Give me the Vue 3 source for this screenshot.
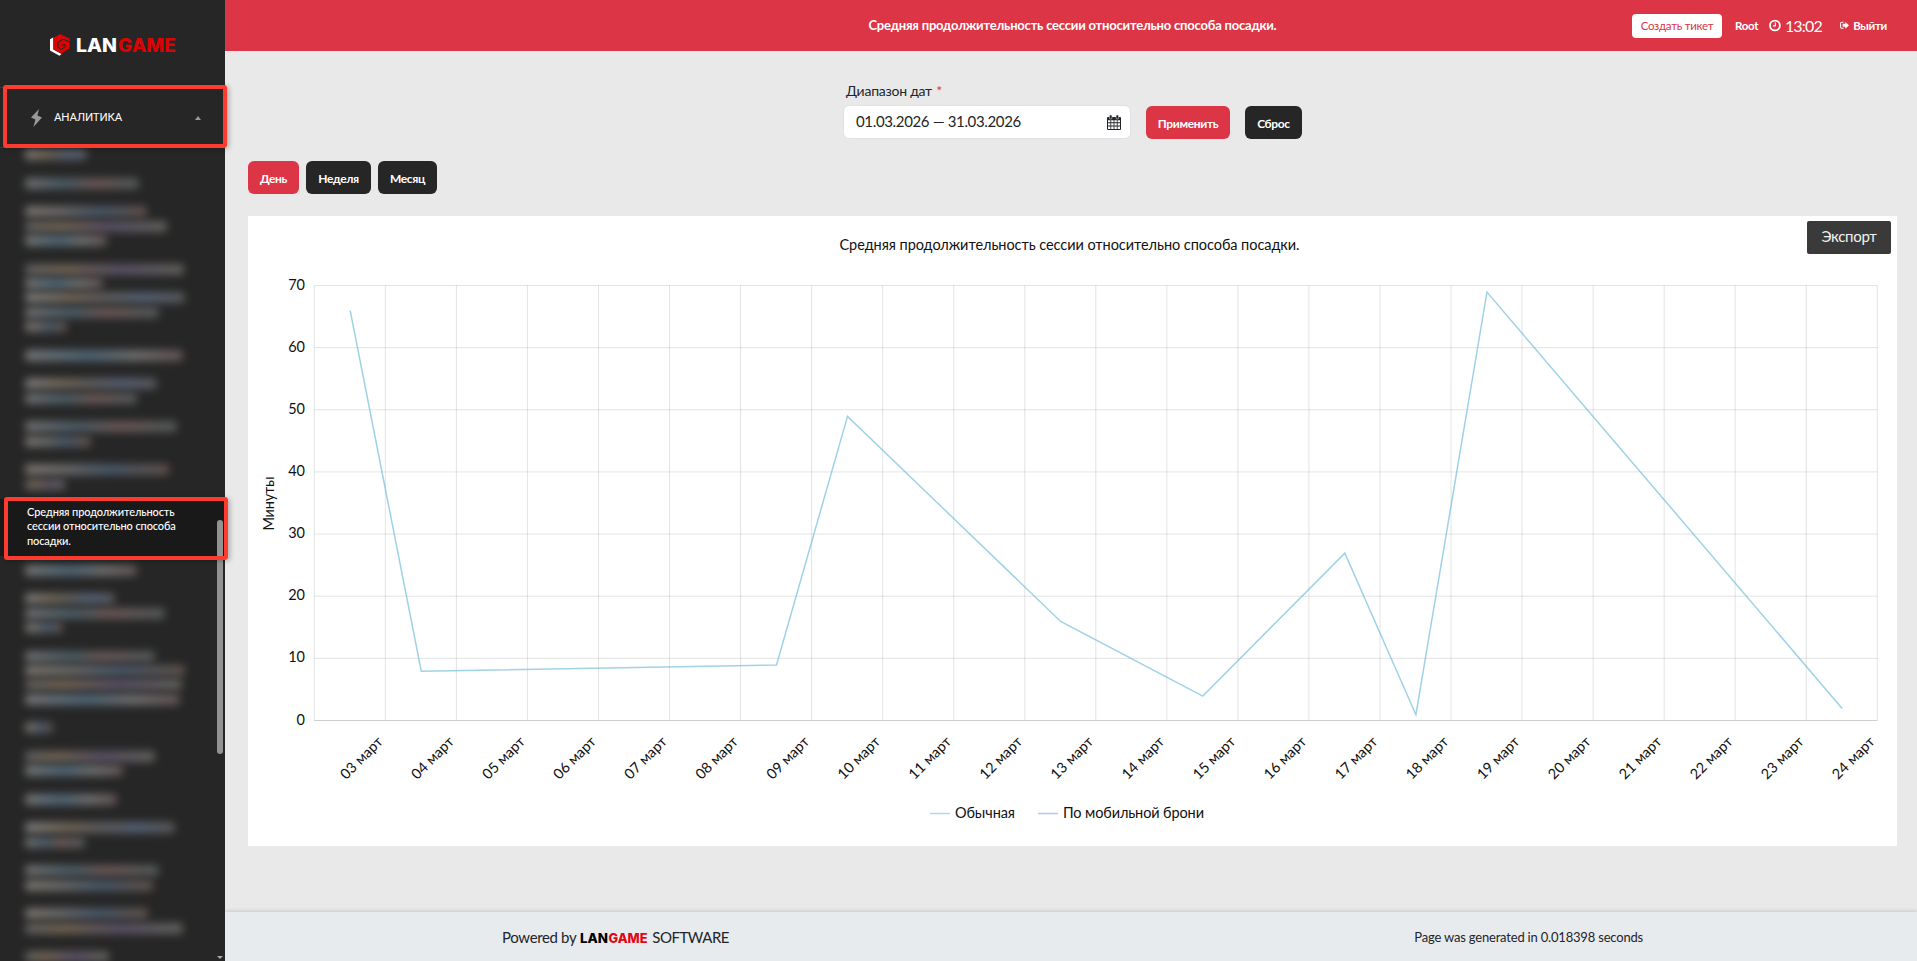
<template>
  <div class="page">
    <aside class="sidebar">
      <div class="logo">
        <svg width="106" height="24" viewBox="0 0 106 24">
          <path d="M1 6.2 4.2 4.4V16.6L12.6 20.9 10.4 22.8 1 17.6z" fill="#fff" />
          <path d="M11 1 20.6 5.6V15.6L12.4 20.4 5 16.6V4.4z" fill="#d90404" />
          <path d="M21 9.2 16.8 7.2 14 6.4 9 9.2V14.4L12 16.4 16.2 14V11.6L12.2 12.4" fill="none" stroke="#262626" stroke-width="1" />
          <text x="27" y="18.5" class="brand" fill="#fff" textLength="41" lengthAdjust="spacingAndGlyphs">LAN</text>
          <text x="69" y="18.5" class="brand" fill="#d90404" textLength="58" lengthAdjust="spacingAndGlyphs">GAME</text>
        </svg>
      </div>

      <div class="menu-head">
        <svg class="bolt" width="11" height="18" viewBox="0 0 11 18">
          <path d="M8 0 0 8.4 4.4 10.6 2.4 18 11 8.6 6.4 6.6z" fill="#999" />
        </svg>
        <span class="menu-title">АНАЛИТИКА</span>
        <span class="caret"></span>
      </div>

      <ul class="menu">
        <li
          v-for="(item, i) in menu"
          :key="i"
          :class="{ active: item.title, hidden: !item.title }"
        >
          <template v-if="item.title">{{ item.title }}</template>
          <template v-else>
            <div v-for="(width, n) in item.lines" :key="n" class="line">
              <i :class="'tone' + ((i + n) % 5)" :style="{ width: width + 'px' }"></i>
            </div>
          </template>
        </li>
      </ul>

      <div class="scroll-thumb"></div>
      <div class="scroll-down"></div>
      <div class="mark mark-head"></div>
      <div class="mark mark-item"></div>
    </aside>

    <div class="main">
      <header class="topbar">
        <div class="topbar-title">{{ title }}</div>
        <div class="topbar-tools">
          <button class="ticket">Создать тикет</button>
          <span class="user">Root</span>
          <span class="clock">
            <svg width="13" height="13" viewBox="0 0 13 13" fill="none" stroke="#fff">
              <circle cx="6.5" cy="6.5" r="5.4" stroke-width="2" />
              <path d="M7 3.2V7H4.2" stroke-width="1.3" />
            </svg>
            <span>{{ time }}</span>
          </span>
          <a class="logout">
            <svg width="11" height="9" viewBox="0 0 11 9">
              <path d="M4.2.7H2.1Q.7.7.7 2.1V6.4Q.7 7.8 2.1 7.8H4.2" fill="none" stroke="#fff" stroke-width="1.2" />
              <path d="M6.4.3 10.8 4.3 6.4 8.3V6.1H3.2V2.5H6.4z" fill="#fff" />
            </svg>
            <span>Выйти</span>
          </a>
        </div>
      </header>

      <section class="content">
        <form class="filter" @submit.prevent>
          <div class="field">
            <label>Диапазон дат <b>*</b></label>
            <div class="date">
              <span>{{ range }}</span>
              <svg width="14" height="15" viewBox="0 0 14 15">
                <path d="M0 3Q0 2 1 2H13Q14 2 14 3V14Q14 15 13 15H1Q0 15 0 14z" fill="#212529" />
                <path
                  d="M1 5.2h2.4v2H1zM4.2 5.2h2.4v2H4.2zM7.4 5.2h2.4v2H7.4zM10.6 5.2H13v2h-2.4zM1 8.2h2.4v2.3H1zM4.2 8.2h2.4v2.3H4.2zM7.4 8.2h2.4v2.3H7.4zM10.6 8.2H13v2.3h-2.4zM1 11.5h2.4V14H1zM4.2 11.5h2.4V14H4.2zM7.4 11.5h2.4V14H7.4zM10.6 11.5H13V14h-2.4z"
                  fill="#fff"
                />
                <rect x="2.4" y="0" width="2.6" height="4" rx="1" fill="#212529" stroke="#fff" stroke-width=".5" />
                <rect x="9" y="0" width="2.6" height="4" rx="1" fill="#212529" stroke="#fff" stroke-width=".5" />
              </svg>
            </div>
          </div>
          <button class="btn btn-red apply">Применить</button>
          <button class="btn reset">Сброс</button>
        </form>

        <div class="periods">
          <button
            v-for="p in periods"
            :key="p.id"
            class="btn"
            :class="[p.id, { 'btn-red': p.id == period }]"
            @click="period = p.id"
          >
            {{ p.name }}
          </button>
        </div>

        <div class="card">
          <button class="export">Экспорт</button>
          <svg class="chart" width="1649" height="630" viewBox="0 0 1649 630">
            <text x="591.5" y="33.5" textLength="460">{{ title }}</text>

            <g class="grid">
              <path v-for="t in ticks" :key="'h' + t" :d="`M${left} ${yPos(t)}H${right}`" />
              <path v-for="n in days.length + 1" :key="'v' + n" :d="`M${left + (n - 1) * step} ${top}V${bottom}`" />
            </g>
            <path class="axis" :d="`M${left} ${bottom}H${right}`" />

            <text v-for="t in ticks" :key="'t' + t" x="57" :y="yPos(t) + 4" text-anchor="end">{{ t }}</text>
            <text
              v-for="(day, i) in days"
              :key="day"
              text-anchor="end"
              :transform="`translate(${left + i * step + 69.5} ${bottom + 22}) rotate(-45)`"
            >
              {{ day }}
            </text>
            <text transform="translate(26 314.5) rotate(-90)" textLength="54">Минуты</text>

            <polyline class="series" :points="points" />

            <path d="M682 597.5H702" stroke="#afd9eb" stroke-width="1.5" />
            <text x="707" y="602" textLength="60">Обычная</text>
            <path d="M790 597.5H810" stroke="#b0caee" stroke-width="1.5" />
            <text x="815" y="602" textLength="141">По мобильной брони</text>
          </svg>
        </div>
      </section>

      <footer class="footer">
        <div class="powered">
          <span>Powered by</span>
          <svg width="68" height="12" viewBox="0 0 68 12">
            <text x="0" y="12" class="brand small" fill="#000" textLength="28" lengthAdjust="spacingAndGlyphs">LAN</text>
            <text x="28.5" y="12" class="brand small" fill="#e30613" textLength="39" lengthAdjust="spacingAndGlyphs">GAME</text>
          </svg>
          <span class="software">SOFTWARE</span>
        </div>
        <div class="generated">Page was generated in 0.018398 seconds</div>
      </footer>
    </div>
  </div>
</template>

<script setup>
import { ref, computed } from "vue";

const title = "Средняя продолжительность сессии относительно способа посадки.";
const time = ref("13:02");
const range = ref("01.03.2026 — 31.03.2026");
const period = ref("day");

const periods = [
  { id: "day", name: "День" },
  { id: "week", name: "Неделя" },
  { id: "month", name: "Месяц" },
];

// blurred items keep only the widths of their lines
const menu = [
  { lines: [62] },
  { lines: [114] },
  { lines: [122, 142, 82] },
  { lines: [159, 78, 161, 134, 42] },
  { lines: [158] },
  { lines: [132, 112] },
  { lines: [152, 66] },
  { lines: [144, 40] },
  { title },
  { lines: [112] },
  { lines: [90, 140, 38] },
  { lines: [130, 160, 157, 155] },
  { lines: [28] },
  { lines: [130, 98] },
  { lines: [92] },
  { lines: [150, 60] },
  { lines: [134, 128] },
  { lines: [123, 158] },
  { lines: [84] },
];

const left = 66.3;
const right = 1629.3;
const top = 69.5;
const bottom = 504.5;
const ticks = [0, 10, 20, 30, 40, 50, 60, 70];

const days = [];
for (let d = 3; d <= 24; d++) {
  days.push(String(d).padStart(2, "0") + " март");
}
const step = (right - left) / days.length;

const values = [
  [3, 66],
  [4, 8],
  [9, 9],
  [10, 49],
  [13, 16],
  [15, 4],
  [17, 27],
  [18, 1],
  [19, 69],
  [24, 2],
];

function yPos(value) {
  return bottom - (value / 70) * (bottom - top);
}

const points = computed(function () {
  return values
    .map(([day, value]) => `${left + 0.4 + (day - 2.5) * step},${yPos(value) + 0.4}`)
    .join(" ");
});
</script>

<style>
body {
  margin: 0;
  overflow: hidden;
}
</style>

<style scoped>
.page {
  display: flex;
  height: 961px;
  background: #e9e9e9;
  color: #212529;
  font-family: Lato, "Liberation Sans", sans-serif;
}

button {
  border: none;
  padding: 0;
  font-family: inherit;
}

.sidebar {
  position: relative;
  z-index: 2;
  flex: none;
  width: 225px;
  height: 961px;
  background: #262626;
}

.logo {
  height: 54px;
  padding: 33px 0 0 49px;
}

.logo svg,
.powered svg {
  display: block;
  overflow: visible;
}

.brand {
  font-family: Inter, sans-serif;
  font-weight: 800;
  font-size: 18.5px;
  letter-spacing: 0;
}

.brand.small {
  font-size: 13px;
}

.menu-head {
  display: flex;
  align-items: center;
  box-sizing: border-box;
  height: 61px;
  padding: 0 24px 0 31px;
  border-top: 1px solid #3a3a3a;
  border-bottom: 1px solid #3a3a3a;
}

.menu-title {
  flex: 1;
  margin-left: 12px;
  padding-bottom: 2px;
  color: #fff;
  font-family: Roboto, sans-serif;
  font-size: 11.5px;
  letter-spacing: -0.15px;
}

.caret {
  border: 3.5px solid transparent;
  border-top: none;
  border-bottom: 4px solid #999;
}

.menu {
  height: 813px;
  margin: 0;
  padding: 0;
  overflow: hidden;
  list-style: none;
  font-size: 11px;
  line-height: 14.34px;
}

.menu li {
  padding: 7.17px 40px 7.17px 27px;
}

.menu li:first-child {
  padding-top: 0;
}

.menu li.active {
  padding-top: 6.17px;
  padding-bottom: 8.17px;
  background: #191919;
  color: #fff;
  font-weight: 500;
  letter-spacing: -0.12px;
}

.hidden .line {
  display: flex;
  align-items: center;
  height: 14.34px;
  margin-left: -2px;
}

.hidden i {
  height: 11px;
  margin-bottom: 1px;
  border-radius: 4px;
  filter: blur(4.5px);
  opacity: 0.85;
}

.tone0 {
  background: linear-gradient(90deg, #888, #7a6d5c 30%, #666 50%, #5c6a80 75%, #606060);
}

.tone1 {
  background: linear-gradient(90deg, #7d7d7d, #50646f 35%, #75605c 60%, #5a6264);
}

.tone2 {
  background: linear-gradient(90deg, #88837a, #727272 30%, #4e6074 60%, #6c5a50);
}

.tone3 {
  background: linear-gradient(90deg, #686868, #7c6c58 25%, #605870 60%, #6c6c62);
}

.tone4 {
  background: linear-gradient(90deg, #848484, #557082 40%, #7a7a7a 70%, #6e5c5c);
}

.scroll-thumb {
  position: absolute;
  left: 217px;
  top: 520px;
  width: 6px;
  height: 234px;
  border-radius: 3px;
  background: #929292;
}

.scroll-down {
  position: absolute;
  left: 217px;
  top: 956px;
  border: 3px solid transparent;
  border-top: 3px solid #aaa;
  border-bottom: none;
}

.mark {
  position: absolute;
  box-sizing: border-box;
  width: 224px;
  height: 63px;
  border: 4px solid #ff3b2f;
  border-radius: 3px;
  box-shadow: 2px 1px 5px rgba(0, 0, 0, 0.25);
}

.mark-head {
  left: 3px;
  top: 85px;
}

.mark-item {
  left: 4px;
  top: 497px;
}

.main {
  display: flex;
  flex: 1;
  flex-direction: column;
}

.topbar {
  display: grid;
  grid-template-columns: 1fr auto;
  align-items: center;
  height: 51px;
  background: #dc3545;
  color: #fff;
}

.topbar-title {
  grid-area: 1 / 1 / 2 / 3;
  padding: 0 0 1px 3px;
  text-align: center;
  font-size: 13px;
  font-weight: 700;
  letter-spacing: -0.21px;
}

.topbar-tools {
  display: flex;
  grid-area: 1 / 2;
  align-items: center;
  padding-right: 30px;
  font-size: 11.5px;
  font-weight: 700;
  letter-spacing: -0.3px;
}

.ticket {
  width: 90px;
  height: 24px;
  margin-right: 13px;
  border-radius: 4px;
  background: #fff;
  color: #dc3545;
  font-size: 11.5px;
  letter-spacing: -0.25px;
}

.user {
  width: 22px;
  padding-bottom: 1px;
  white-space: nowrap;
}

.clock {
  display: flex;
  align-items: center;
  gap: 4px;
  width: 53px;
  margin: 0 18px 0 12px;
  padding-bottom: 1px;
  font-size: 16px;
  font-weight: 400;
  letter-spacing: -0.8px;
}

.logout {
  display: flex;
  align-items: center;
  gap: 4px;
  width: 47px;
}

.content {
  flex: 1;
  padding: 0 20px 0 23px;
}

.filter {
  display: flex;
  align-items: flex-end;
  height: 88px;
  padding-left: 595px;
}

.field label {
  display: block;
  margin: 0 0 6px 3px;
  font-size: 14px;
  line-height: 17px;
  letter-spacing: -0.25px;
}

.field b {
  margin-left: 1px;
  color: #dc3545;
  font-weight: 400;
}

.date {
  display: flex;
  align-items: center;
  justify-content: space-between;
  box-sizing: border-box;
  width: 288px;
  height: 34px;
  padding: 0 9px 2px 12px;
  border: 1px solid #dee2e6;
  border-radius: 6px;
  background: #fff;
  font-size: 15px;
  letter-spacing: -0.35px;
}

.date svg {
  margin-top: 2px;
}

.btn {
  height: 33px;
  padding-top: 2px;
  border-radius: 6px;
  background: #262626;
  color: #fff;
  font-size: 12px;
  font-weight: 700;
  letter-spacing: -0.35px;
}

.btn-red {
  background: #dc3545;
}

.apply {
  width: 84px;
  margin-left: 15px;
}

.reset {
  width: 57px;
  margin-left: 15px;
}

.periods {
  display: flex;
  gap: 7px;
  margin-top: 22px;
}

.day {
  width: 51px;
}

.week {
  width: 65px;
}

.month {
  width: 59px;
}

.card {
  position: relative;
  height: 630px;
  margin-top: 22px;
  background: #fff;
}

.chart {
  display: block;
}

.chart text {
  fill: #111;
  font-size: 14.5px;
}

.grid path {
  stroke: #000;
  stroke-opacity: 0.11;
  fill: none;
}

.axis {
  stroke: #cecece;
}

.series {
  fill: none;
  stroke: #64b5d9;
  stroke-opacity: 0.62;
  stroke-width: 1.5;
}

.export {
  position: absolute;
  top: 5px;
  right: 6px;
  width: 84px;
  height: 33px;
  padding-bottom: 3px;
  border-radius: 2px;
  background: #3a3a3a;
  color: #f2f2f2;
  font-size: 15px;
  letter-spacing: -0.3px;
}

.footer {
  display: flex;
  align-items: center;
  justify-content: space-between;
  height: 49px;
  padding: 0 274px 0 277px;
  background: #e8ebee;
  box-shadow: 0 -1px 4px rgba(0, 0, 0, 0.14);
}

.powered {
  display: flex;
  align-items: center;
  gap: 4px;
  font-size: 15px;
  letter-spacing: -0.35px;
}

.software {
  letter-spacing: -0.5px;
}

.generated {
  font-size: 13px;
  letter-spacing: -0.19px;
}
</style>
